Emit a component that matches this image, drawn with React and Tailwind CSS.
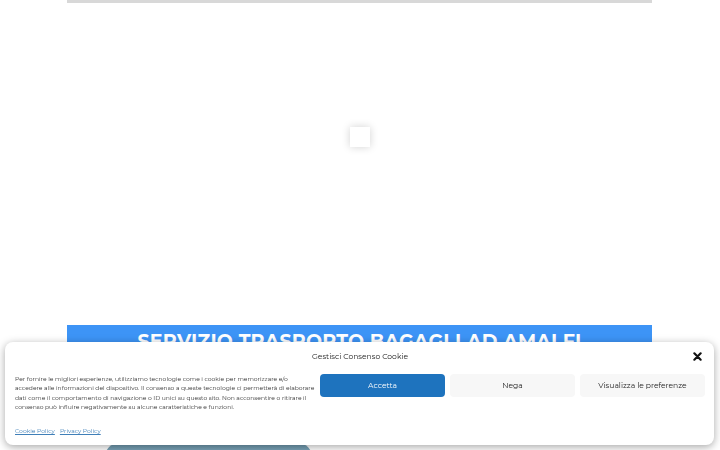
import React from "react";

const font = { fontFamily: "Montserrat, 'DejaVu Sans', sans-serif" };

const CookieBanner = () => {
    return (
        <div
            className="fixed left-[5px] right-[6px] bottom-[5px] h-[103px] bg-white rounded-lg shadow-[0_2px_8px_rgba(0,0,0,0.35)] pl-[10px] pr-[9px] pt-[9px] text-[#222]"
            style={font}
        >
            <div className="relative flex justify-center">
                <span className="text-[7.6px] leading-[12px] text-[#222]">Gestisci Consenso Cookie</span>
                <button className="absolute right-[3px] top-[1px] text-[#111]">
                    <svg width="9" height="9" viewBox="0 0 10 10">
                        <path d="M1.5 1.5 L8.5 8.5 M8.5 1.5 L1.5 8.5" stroke="currentColor" strokeWidth="2.4" strokeLinecap="round" />
                    </svg>
                </button>
            </div>
            <div className="flex gap-[5px] mt-[11px]">
                <div className="w-[300px] shrink-0">
                    <p className="text-[6px] leading-[9.3px] text-[#333] pt-[1px] whitespace-nowrap">
                        Per fornire le migliori esperienze, utilizziamo tecnologie come i cookie per memorizzare e/o
                        <br />
                        accedere alle informazioni del dispositivo. Il consenso a queste tecnologie ci permetterà di elaborare
                        <br />
                        dati come il comportamento di navigazione o ID unici su questo sito. Non acconsentire o ritirare il
                        <br />
                        consenso può influire negativamente su alcune caratteristiche e funzioni.
                    </p>
                    <div className="flex gap-[5px] mt-[15px] text-[6px] text-[#3f7fb8]">
                        <a className="underline">Cookie Policy</a>
                        <a className="underline">Privacy Policy</a>
                    </div>
                </div>
                <div className="flex-1 flex gap-[5px]">
                    <button className="flex-1 h-[23px] rounded-[4px] bg-[#1e73be] text-white text-[7.6px]">Accetta</button>
                    <button className="flex-1 h-[23px] rounded-[4px] bg-[#f7f7f7] text-[#222] text-[7.6px]">Nega</button>
                    <button className="flex-1 h-[23px] rounded-[4px] bg-[#f7f7f7] text-[#222] text-[7.6px]">Visualizza le preferenze</button>
                </div>
            </div>
        </div>
    );
};

const App = () => {
    return (
        <div className="relative h-[450px] overflow-hidden bg-white">
            <div className="w-[585px] ml-[67px]">
                <div className="h-[3px] bg-[#d8d8d8]" />
                <div className="h-[322px] flex justify-center pt-[124px]">
                    <div className="w-[20px] h-[20px] bg-white shadow-[0_0_8px_rgba(0,0,0,0.18)]" />
                </div>
                <div className="h-[40px] bg-[#3d94f6] flex justify-center pt-[4px]">
                    <h1 className="text-white font-bold text-[19px] leading-[26px] tracking-[0.2px]" style={font}>
                        SERVIZIO TRASPORTO BAGAGLI AD AMALFI
                    </h1>
                </div>
                <div className="h-[78px]" />
                <div className="ml-[38px] w-[207px] h-[20px] rounded-t-[14px] bg-gradient-to-b from-[#6e9ab0] to-[#8fb3c4]" />
            </div>
            <CookieBanner />
        </div>
    );
};

export default App;
